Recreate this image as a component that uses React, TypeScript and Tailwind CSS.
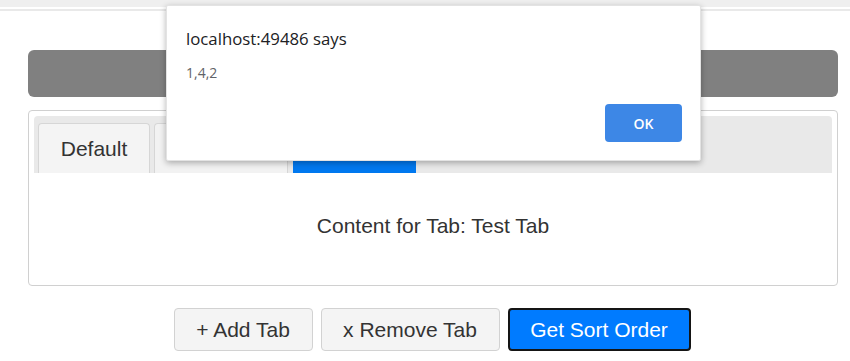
import React from "react";

export default function App() {
  return (
    <div className="relative w-[850px] h-[361px] overflow-hidden bg-white" style={{ fontFamily: '"Liberation Sans", Arial, sans-serif' }}>
      <div className="h-[7px] bg-[#efefef]" />
      <div className="mt-[2px] h-[2px] bg-[#e9e9e9]" />
      <div className="px-[28px] pt-[39px] w-[866px]">
        <div className="h-[47px] rounded-[6px] bg-[#808080]" />
        <div className="mt-[13px] h-[176px] rounded-[4px] border border-[#d0d0d0] p-[5px] flex flex-col">
          <div className="h-[57px] rounded-t-[4px] bg-[#e9e9e9] px-[4px] pt-[7px] flex items-end gap-[4px]">
            <div className="h-[50px] w-[112px] rounded-t-[4px] border border-b-0 border-[#d6d6d6] bg-[#f4f4f4] flex items-center justify-center text-[21px] text-[#333]">
              Default
            </div>
            <div className="h-[50px] w-[134px] rounded-t-[4px] border border-b-0 border-[#d6d6d6] bg-[#f2f2f2] flex items-center justify-center text-[21px] text-[#333]">
              Tab 2
            </div>
            <div className="ml-[1px] h-[50px] w-[123px] rounded-t-[4px] bg-[#0078ef] flex items-center justify-center text-[21px] text-white">
              Test Tab
            </div>
          </div>
          <div className="flex-1 flex items-center justify-center pb-[2px] text-[21px] text-[#333]">
            Content for Tab: Test Tab
          </div>
        </div>
        <div className="mt-[22px] flex justify-center gap-[8px] pr-[2px]">
          <button className="h-[43px] w-[139px] rounded-[4px] border border-[#d2d2d2] bg-[#f4f4f4] text-[21px] text-[#333]">
            + Add Tab
          </button>
          <button className="h-[43px] w-[179px] rounded-[4px] border border-[#d2d2d2] bg-[#f4f4f4] text-[21px] text-[#333]">
            x Remove Tab
          </button>
          <button className="h-[43px] w-[183px] rounded-[4px] border-2 border-[#151515] bg-[#007bff] text-[21px] text-white">
            Get Sort Order
          </button>
        </div>
      </div>

      <div
        className="absolute left-[166px] top-[5px] w-[535px] h-[156px] bg-white rounded-[2px] border border-[#e3e3e3] shadow-[0_2px_6px_rgba(0,0,0,0.3)]"
        style={{ fontFamily: '"Open Sans", "Noto Sans", sans-serif' }}
      >
        <div className="absolute left-[19px] top-[22px] text-[16.8px] leading-[22px] text-[#202124]">localhost:49486 says</div>
        <div className="absolute left-[19px] top-[58px] text-[14px] leading-[18px] text-[#5f6368]">1,4,2</div>
        <button className="absolute right-[18px] bottom-[18px] w-[77px] h-[38px] rounded-[4px] bg-[#3d87e6] text-white text-[14px] font-semibold">
          OK
        </button>
      </div>
    </div>
  );
}
